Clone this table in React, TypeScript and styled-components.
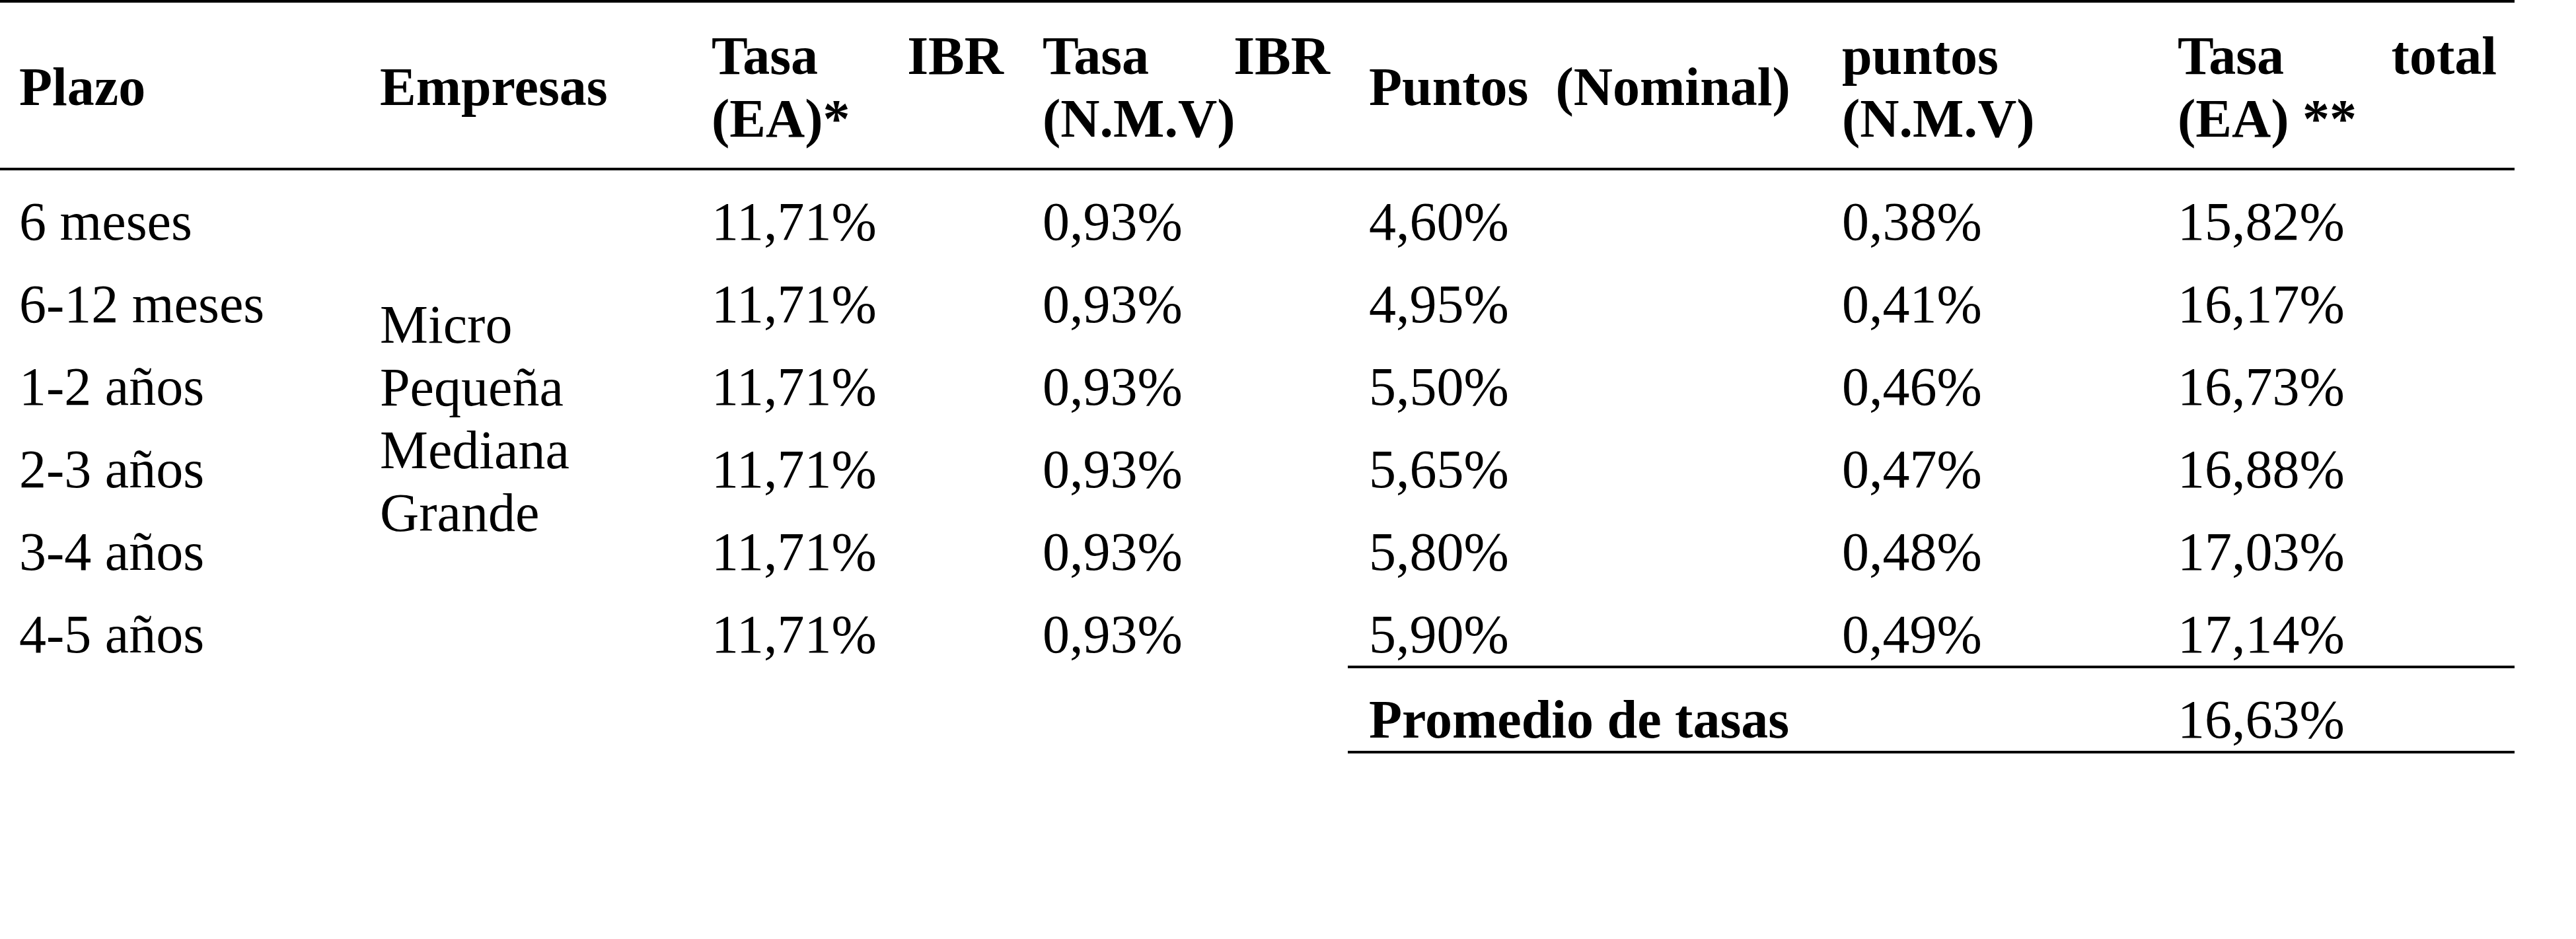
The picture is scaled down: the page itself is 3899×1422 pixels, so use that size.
import styled, { createGlobalStyle } from "styled-components";

const GlobalStyle = createGlobalStyle`
  html, body {
    margin: 0;
    padding: 0;
    background: #fff;
  }
  body {
    font-family: "Liberation Serif", "Times New Roman", serif;
    color: #000;
  }
`;

const rows = [
  ["6 meses", "11,71%", "0,93%", "4,60%", "0,38%", "15,82%"],
  ["6-12 meses", "11,71%", "0,93%", "4,95%", "0,41%", "16,17%"],
  ["1-2 años", "11,71%", "0,93%", "5,50%", "0,46%", "16,73%"],
  ["2-3 años", "11,71%", "0,93%", "5,65%", "0,47%", "16,88%"],
  ["3-4 años", "11,71%", "0,93%", "5,80%", "0,48%", "17,03%"],
  ["4-5 años", "11,71%", "0,93%", "5,90%", "0,49%", "17,14%"],
];

const widths = [543, 502, 501, 494, 716, 508, 542];
const empresas = ["Micro", "Pequeña", "Mediana", "Grande"];

export default function App() {
  return (
    <>
      <GlobalStyle />
      <Table>
        <colgroup>
          {widths.map((w, i) => (
            <col key={i} style={{ width: w }} />
          ))}
        </colgroup>
        <thead>
          <HeadRow>
            <HeadCell $first>Plazo</HeadCell>
            <HeadCell>Empresas</HeadCell>
            <HeadCell>Tasa IBR (EA)*</HeadCell>
            <HeadCell>Tasa IBR (N.M.V)</HeadCell>
            <HeadCell>Puntos{"\u00a0"} (Nominal)</HeadCell>
            <HeadCell>puntos (N.M.V)</HeadCell>
            <HeadCell>Tasa total (EA) **</HeadCell>
          </HeadRow>
        </thead>
        <tbody>
          {rows.map((r, i) => {
            const last = i === rows.length - 1;
            return (
              <tr key={r[0]}>
                <Cell $first>{r[0]}</Cell>
                {i === 0 && (
                  <GroupCell rowSpan={rows.length}>
                    {empresas.map((e) => (
                      <div key={e}>{e}</div>
                    ))}
                  </GroupCell>
                )}
                <Cell>{r[1]}</Cell>
                <Cell>{r[2]}</Cell>
                <Cell $ruled={last}>{r[3]}</Cell>
                <Cell $ruled={last}>{r[4]}</Cell>
                <Cell $ruled={last}>{r[5]}</Cell>
              </tr>
            );
          })}
          <tr>
            <Cell colSpan={4} />
            <Cell colSpan={2} $ruled $bold>
              Promedio de tasas
            </Cell>
            <Cell $ruled>16,63%</Cell>
          </tr>
        </tbody>
      </Table>
    </>
  );
}

const Table = styled.table`
  width: 3806px;
  table-layout: fixed;
  border-collapse: collapse;
  border-top: 4px solid #000;
  font-size: 82px;
  line-height: 95px;
`;

const HeadRow = styled.tr`
  height: 254px;
`;

const HeadCell = styled.th<{ $first?: boolean }>`
  padding: 5px 27px 0 ${(p) => (p.$first ? "29px" : "32px")};
  border-bottom: 4px solid #000;
  font-weight: 700;
  text-align: justify;
  vertical-align: middle;
`;

const Cell = styled.td<{ $first?: boolean; $ruled?: boolean; $bold?: boolean }>`
  padding: 30px 27px 0 ${(p) => (p.$first ? "29px" : "32px")};
  height: 95px;
  vertical-align: top;
  white-space: nowrap;
  font-weight: ${(p) => (p.$bold ? 700 : 400)};
  border-bottom: ${(p) => (p.$ruled ? "4px solid #000" : "none")};
`;

const GroupCell = styled.td`
  padding: 0 27px 0 32px;
  vertical-align: middle;
`;
